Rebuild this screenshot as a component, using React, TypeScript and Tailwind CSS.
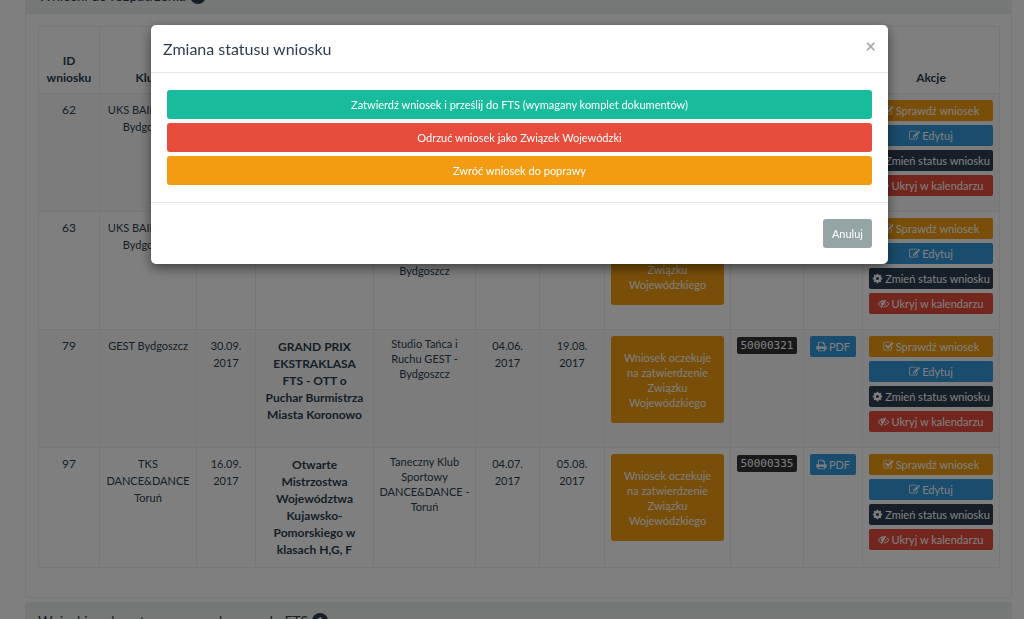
import React, { useState } from "react";

type Application = {
  id: number;
  club: string;
  date: string;
  name: string;
  organizer: string;
  submitted: string;
  deadline: string;
  number: string;
};

const applications: Application[] = [
  {
    id: 62,
    club: "UKS BAILANDO Bydgoszcz",
    date: "10.09. 2017",
    name: "Turniej Tańca Bydgoszcz",
    organizer: "Uczniowski Klub Sportowy BAILANDO - Bydgoszcz",
    submitted: "01.06. 2017",
    deadline: "30.07. 2017",
    number: "50000304",
  },
  {
    id: 63,
    club: "UKS BAILANDO Bydgoszcz",
    date: "10.09. 2017",
    name: "Turniej Tańca Bydgoszcz",
    organizer: "Uczniowski Klub Sportowy BAILANDO - Bydgoszcz",
    submitted: "01.06. 2017",
    deadline: "30.07. 2017",
    number: "50000305",
  },
  {
    id: 79,
    club: "GEST Bydgoszcz",
    date: "30.09. 2017",
    name: "GRAND PRIX EKSTRAKLASA FTS - OTT o Puchar Burmistrza Miasta Koronowo",
    organizer: "Studio Tańca i Ruchu GEST - Bydgoszcz",
    submitted: "04.06. 2017",
    deadline: "19.08. 2017",
    number: "50000321",
  },
  {
    id: 97,
    club: "TKS DANCE&DANCE Toruń",
    date: "16.09. 2017",
    name: "Otwarte Mistrzostwa Województwa Kujawsko-Pomorskiego w klasach H,G, F",
    organizer: "Taneczny Klub Sportowy DANCE&DANCE - Toruń",
    submitted: "04.07. 2017",
    deadline: "05.08. 2017",
    number: "50000335",
  },
];

const icons = {
  check:
    "M1472 930v318q0 119-84.5 203.5t-203.5 84.5h-832q-119 0-203.5-84.5t-84.5-203.5v-832q0-119 84.5-203.5t203.5-84.5h832q63 0 117 25 15 7 18 23 3 17-9 29l-49 49q-10 10-23 10-3 0-9-2-23-6-45-6h-832q-66 0-113 47t-47 113v832q0 66 47 113t113 47h832q66 0 113-47t47-113v-254q0-13 9-22l64-64q10-10 23-10 6 0 12 3 20 8 20 29zm231-489l-814 814q-24 24-57 24t-57-24l-430-430q-24-24-24-57t24-57l110-110q24-24 57-24t57 24l263 263 647-647q24-24 57-24t57 24l110 110q24 24 24 57t-24 57z",
  edit:
    "M888 1184l116-116-152-152-116 116v56h96v96h56zm440-720q-16-16-33 1l-350 350q-17 17-1 33t33-1l350-350q17-17 1-33zm80 594v190q0 119-84.5 203.5t-203.5 84.5h-832q-119 0-203.5-84.5t-84.5-203.5v-832q0-119 84.5-203.5t203.5-84.5h832q63 0 117 25 15 7 18 23 3 17-9 29l-49 49q-14 14-32 8-23-6-45-6h-832q-66 0-113 47t-47 113v832q0 66 47 113t113 47h832q66 0 113-47t47-113v-126q0-13 9-22l64-64q15-15 35-7t20 29zm-96-738l288 288-672 672h-288v-288zm444 132l-92 92-288-288 92-92q28-28 68-28t68 28l152 152q28 28 28 68t-28 68z",
  cog:
    "M1152 896q0-106-75-181t-181-75-181 75-75 181 75 181 181 75 181-75 75-181zm512-109v222q0 12-8 23t-20 13l-185 28q-19 54-39 91 35 50 107 138 10 12 10 25t-9 23q-27 37-99 108t-94 71q-12 0-26-9l-138-108q-44 23-91 38-16 136-29 186-7 28-36 28h-222q-14 0-24.5-8.5t-11.5-21.5l-28-184q-49-16-90-37l-141 107q-10 9-25 9-14 0-25-11-126-114-165-168-7-10-7-23 0-12 8-23 15-21 51-66.5t54-70.5q-27-50-41-99l-183-27q-13-2-21-12.5t-8-23.5v-222q0-12 8-23t19-13l186-28q14-46 39-92-40-57-107-138-10-12-10-24 0-10 9-23 26-36 98.5-107.5t94.5-71.5q13 0 26 10l138 107q44-23 91-38 16-136 29-186 7-28 36-28h222q14 0 24.5 8.5t11.5 21.5l28 184q49 16 90 37l142-107q9-9 24-9 13 0 25 10 129 119 165 170 7 8 7 22 0 12-8 23-15 21-51 66.5t-54 70.5q26 50 41 98l183 28q13 2 21 12.5t8 23.5z",
  eyeSlash:
    "M555 1335l78-141q-87-63-136-159t-49-203q0-121 61-225-229 117-381 353 167 258 427 375zm389-759q0-20-14-34t-34-14q-125 0-214.5 89.5t-89.5 214.5q0 20 14 34t34 14 34-14 14-34q0-86 61-147t147-61q20 0 34-14t14-34zm363-191q0 7-1 9-106 189-316 567t-315 566l-49 89q-10 16-28 16-12 0-134-70-16-10-16-28 0-12 44-87-143-65-263.5-173t-208.5-245q-20-31-20-69t20-69q153-235 380-371t496-136q89 0 180 17l54-97q10-16 28-16 5 0 18 6t31 15.5 33 18.5 31.5 18.5 19.5 11.5q16 10 16 27zm37 447q0 139-79 253.5t-209 164.5l280-502q8 45 8 84zm448 128q0 35-20 69-39 64-109 145-150 172-347.5 267t-419.5 95l74-132q212-18 392.5-137t301.5-307q-115-179-282-294l63-112q95 64 182.5 153t144.5 184q20 34 20 69z",
  print:
    "M448 1536h896v-256h-896v256zm0-640h896v-384h-160q-40 0-68-28t-28-68v-160h-640v640zm1152 64q0-26-19-45t-45-19-45 19-19 45 19 45 45 19 45-19 19-45zm128 0v416q0 13-9.5 22.5t-22.5 9.5h-224v160q0 40-28 68t-68 28h-960q-40 0-68-28t-28-68v-160h-224q-13 0-22.5-9.5t-9.5-22.5v-416q0-79 56.5-135.5t135.5-56.5h64v-544q0-40 28-68t68-28h672q40 0 88 20t76 48l152 152q28 28 48 76t20 88v256h64q79 0 135.5 56.5t56.5 135.5z",
};

const Icon = ({ name }: { name: keyof typeof icons }) => (
  <svg
    viewBox="0 0 1792 1792"
    className="size-[11px] shrink-0 fill-current"
    aria-hidden="true"
  >
    <path d={icons[name]} />
  </svg>
);

const actionClass =
  "flex h-[21px] w-full items-center justify-center gap-0.5 rounded-[2px] text-[11px] leading-[18px] whitespace-nowrap text-white";
const cellClass = "border border-[#ecf0f1] px-1.5 py-[7px]";
const controlCellClass = "border border-[#ecf0f1] px-1.5 py-1.5";
const modalButtonClass =
  "h-[29px] w-full rounded-[3px] text-[11px] leading-[17px] text-white";

const ApplicationRow = ({
  item,
  onChangeStatus,
}: {
  item: Application;
  onChangeStatus: () => void;
}) => (
  <tr className="h-[118px] align-top odd:bg-[#f9f9f9]">
    <td className={cellClass}>{item.id}</td>
    <td className={`${cellClass} text-[11px]`}>{item.club}</td>
    <td className={`${cellClass} text-[11px]`}>{item.date}</td>
    <td className="border border-[#ecf0f1] px-2 pt-2 pb-[9px] font-bold">
      {item.name}
    </td>
    <td className="border border-[#ecf0f1] px-1 py-1.5 text-[11px] leading-[15px]">
      {item.organizer}
    </td>
    <td className={`${cellClass} text-[11px]`}>{item.submitted}</td>
    <td className={`${cellClass} text-[11px]`}>{item.deadline}</td>
    <td className={controlCellClass}>
      <button
        type="button"
        className="h-[87px] w-full rounded-[3px] bg-[#f39c12] px-3 text-[11px] leading-[15px] text-white"
      >
        Wniosek oczekuje na zatwierdzenie Związku Wojewódzkiego
      </button>
    </td>
    <td className={cellClass}>
      <kbd className="block h-[17px] rounded-[2px] bg-[#333] font-['DejaVu_Sans_Mono',monospace] text-[11px] leading-[17px] text-white">
        {item.number}
      </kbd>
    </td>
    <td className={controlCellClass}>
      <a href="#pdf" className={`${actionClass} bg-[#3498db]`}>
        <Icon name="print" />
        PDF
      </a>
    </td>
    <td className={controlCellClass}>
      <div className="flex flex-col gap-1">
        <button type="button" className={`${actionClass} bg-[#f39c12]`}>
          <Icon name="check" />
          Sprawdź wniosek
        </button>
        <button type="button" className={`${actionClass} bg-[#3498db]`}>
          <Icon name="edit" />
          Edytuj
        </button>
        <button
          type="button"
          onClick={onChangeStatus}
          className={`${actionClass} bg-[#2c3e50]`}
        >
          <Icon name="cog" />
          Zmień status wniosku
        </button>
        <button type="button" className={`${actionClass} bg-[#e74c3c]`}>
          <Icon name="eyeSlash" />
          Ukryj w kalendarzu
        </button>
      </div>
    </td>
  </tr>
);

const StatusModal = ({ onClose }: { onClose: () => void }) => (
  <div className="fixed inset-0 flex items-start justify-center bg-black/50 pt-[25px] pl-[15px]">
    <div
      role="dialog"
      aria-modal="true"
      aria-labelledby="status-title"
      className="w-full max-w-[737px] rounded-[5px] bg-white shadow-[0_4px_12px_rgba(0,0,0,0.5)]"
    >
      <div className="flex h-12 items-center justify-between border-b border-[#e5e5e5] px-3">
        <h4 id="status-title" className="text-[16px] leading-5">
          Zmiana statusu wniosku
        </h4>
        <button
          type="button"
          aria-label="Zamknij"
          onClick={onClose}
          className="pb-1.5 text-[18px] leading-4 font-bold text-[#aaa]"
        >
          ×
        </button>
      </div>
      <div className="flex flex-col gap-1 px-4 py-[17px]">
        <button type="button" className={`${modalButtonClass} bg-[#18bc9c]`}>
          Zatwierdź wniosek i prześlij do FTS (wymagany komplet dokumentów)
        </button>
        <button type="button" className={`${modalButtonClass} bg-[#e74c3c]`}>
          Odrzuć wniosek jako Związek Wojewódzki
        </button>
        <button type="button" className={`${modalButtonClass} bg-[#f39c12]`}>
          Zwróć wniosek do poprawy
        </button>
      </div>
      <div className="flex justify-end border-t border-[#e5e5e5] p-4">
        <button
          type="button"
          onClick={onClose}
          className="h-[29px] rounded-[3px] bg-[#95a5a6] px-[9px] text-[11px] leading-[17px] text-white"
        >
          Anuluj
        </button>
      </div>
    </div>
  </div>
);

const PanelHeading = ({ title, count }: { title: string; count: number }) => (
  <div className="flex h-9 items-center gap-1 border-b border-[#ecf0f1] bg-[#ecf0f1] px-3">
    <h3 className="text-[14px] leading-4">{title}</h3>
    <span className="flex h-4 min-w-4 items-center justify-center rounded-full bg-[#2c3e50] text-[11px] leading-3 font-bold text-white">
      {count}
    </span>
  </div>
);

export default function App() {
  const [isModalActive, setIsModalActive] = useState<boolean>(true);

  return (
    <div className="h-screen overflow-hidden bg-white font-[Lato,sans-serif] text-[#2c3e50]">
      <main className="-mt-[23px] flex flex-col gap-1 pr-3 pl-[25px]">
        <section className="rounded-[3px] border border-[#ecf0f1]">
          <PanelHeading title="Wnioski do rozpatrzenia" count={4} />
          <div className="px-3 pt-3 pb-[29px]">
            <table className="w-full table-fixed border-collapse text-center text-[12px] leading-[17px]">
              <colgroup>
                <col className="w-[61px]" />
                <col className="w-[97px]" />
                <col className="w-[59px]" />
                <col className="w-[118px]" />
                <col className="w-[102px]" />
                <col className="w-[64px]" />
                <col className="w-[65px]" />
                <col className="w-[126px]" />
                <col className="w-[73px]" />
                <col className="w-[59px]" />
                <col className="w-[137px]" />
              </colgroup>
              <thead>
                <tr className="h-[67px] align-bottom [&>th]:border [&>th]:border-[#ecf0f1] [&>th]:px-1.5 [&>th]:py-[7px]">
                  <th>ID wniosku</th>
                  <th>Klub</th>
                  <th>Data</th>
                  <th>Nazwa</th>
                  <th>Organizator</th>
                  <th>Złożono</th>
                  <th>Termin</th>
                  <th>Status</th>
                  <th>Numer</th>
                  <th>PDF</th>
                  <th>Akcje</th>
                </tr>
              </thead>
              <tbody>
                {applications.map((item) => (
                  <ApplicationRow
                    key={item.id}
                    item={item}
                    onChangeStatus={() => setIsModalActive(true)}
                  />
                ))}
              </tbody>
            </table>
          </div>
        </section>
        <section className="rounded-[3px] border border-[#ecf0f1]">
          <PanelHeading
            title="Wnioski zaakceptowane, przekazane do FTS"
            count={1}
          />
        </section>
      </main>
      {isModalActive && <StatusModal onClose={() => setIsModalActive(false)} />}
    </div>
  );
}
